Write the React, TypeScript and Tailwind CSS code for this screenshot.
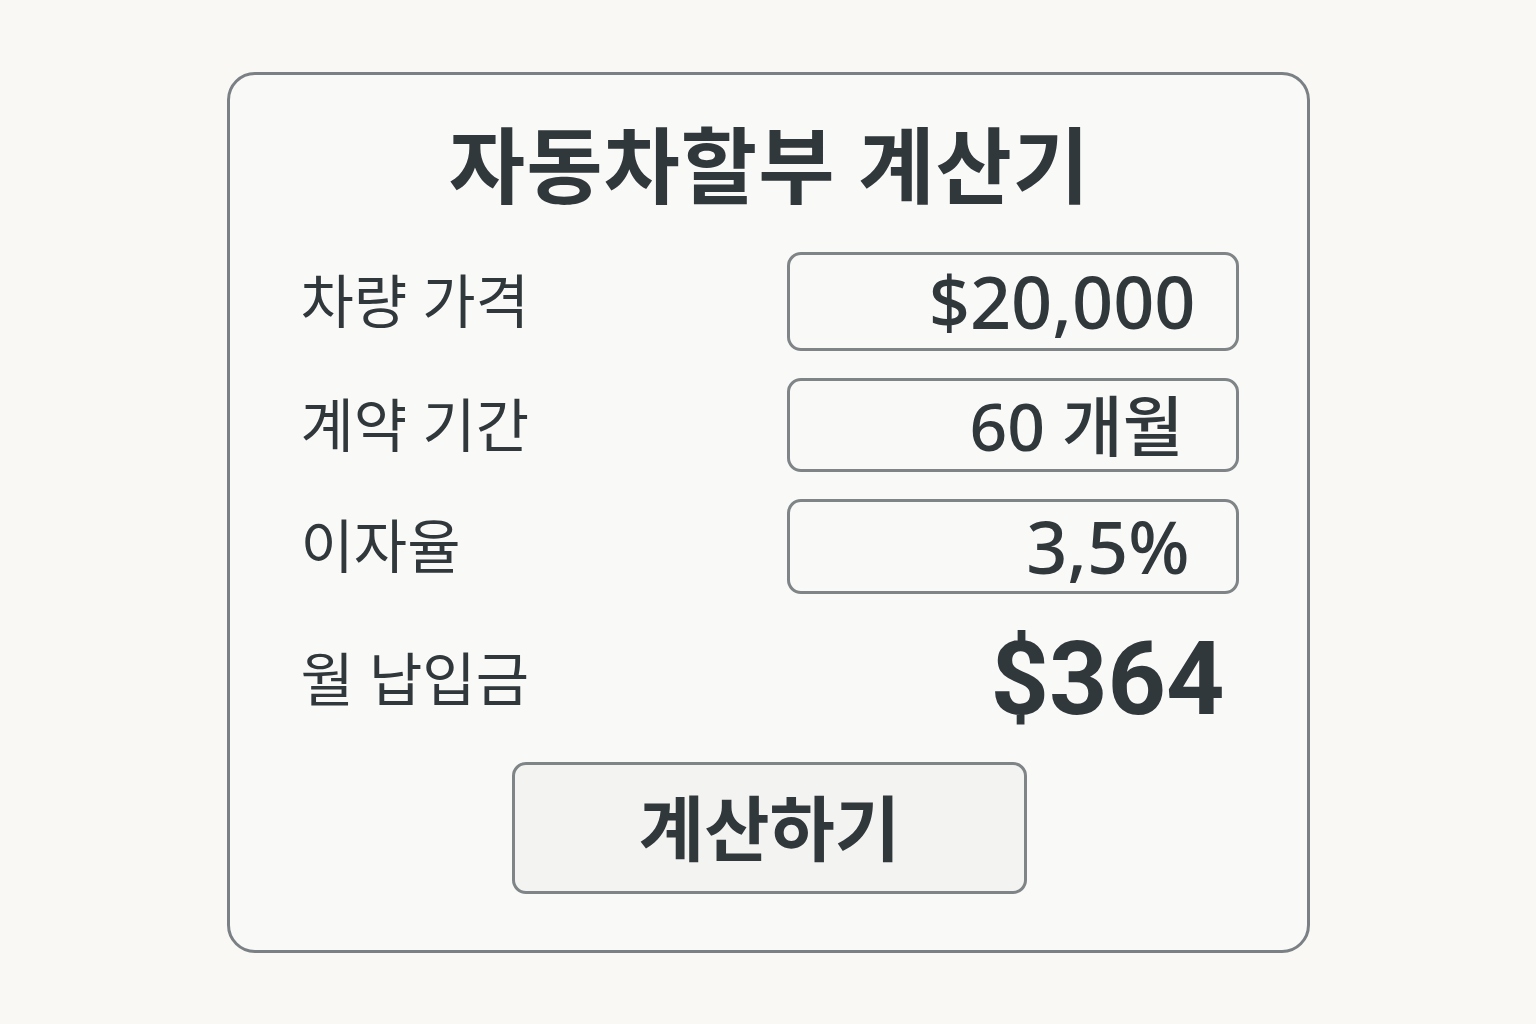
export default function App() {
  const rows = [
    { label: "차량 가격", value: "$20,000", h: "h-[99px]", pr: "pr-[40px]", size: "text-[72px]" },
    { label: "계약 기간", value: "60 개월", h: "h-[94px]", pr: "pr-[52px]", size: "text-[66px]" },
    { label: "이자율", value: "3,5%", h: "h-[95px]", pr: "pr-[46px]", size: "text-[72px]" },
  ];

  return (
    <div
      className="min-h-screen flex items-center justify-center bg-[#f9f8f5] text-[#31383b]"
      style={{ fontFamily: '"Noto Sans", "Noto Sans CJK KR", sans-serif' }}
    >
      <div className="w-[1083px] h-[881px] bg-[#f9f9f8] border-[3px] border-[#7a8083] rounded-[28px] pl-[71px] pr-[68px] pt-[35px]">
        <h1 className="text-center text-[83px] font-bold leading-none tracking-[1px] h-[110px] flex items-center justify-center">
          자동차할부 계산기
        </h1>

        <div className="mt-[32px] flex flex-col gap-[27px]">
          {rows.map((r) => (
            <div key={r.label} className="flex items-center justify-between">
              <span className="text-[58px] leading-none">{r.label}</span>
              <div
                className={`w-[452px] ${r.h} border-[3px] border-[#7f8487] rounded-[14px] flex items-center justify-end ${r.pr} ${r.size} font-medium leading-none`}
              >
                {r.value}
              </div>
            </div>
          ))}
        </div>

        <div className="mt-[34px] flex items-center justify-between">
          <span className="text-[58px] leading-none">월 납입금</span>
          <span
            className="text-[102px] font-bold leading-none pr-[14px]"
            style={{ fontFamily: "Roboto, sans-serif" }}
          >
            $364
          </span>
        </div>

        <div className="mt-[32px] flex justify-center">
          <button className="w-[515px] h-[132px] bg-[#f3f3f2] border-[3px] border-[#7f8487] rounded-[14px] text-[71px] font-semibold leading-none">
            계산하기
          </button>
        </div>
      </div>
    </div>
  );
}
